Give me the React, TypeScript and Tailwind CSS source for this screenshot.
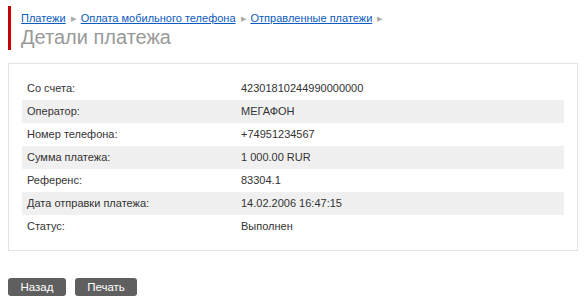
import React from "react";

const rows: [string, string][] = [
  ["Со счета:", "42301810244990000000"],
  ["Оператор:", "МЕГАФОН"],
  ["Номер телефона:", "+74951234567"],
  ["Сумма платежа:", "1 000.00 RUR"],
  ["Референс:", "83304.1"],
  ["Дата отправки платежа:", "14.02.2006 16:47:15"],
  ["Статус:", "Выполнен"],
];

const Sep = () => <span className="mx-[5px] text-[7px] text-[#aaaaaa]">▶</span>;

export default function App() {
  return (
    <div className="w-[588px] h-[307px] bg-white text-[11px] text-[#333333]" style={{ fontFamily: '"Liberation Sans", Arial, sans-serif' }}>
      <div className="pt-[6px] pl-[8px] flex">
        <div className="w-[3px] h-[44px] bg-[#cc0000]" />
        <div className="pl-[10px]">
          <div className="pt-[6px] leading-[13px] text-[11px] flex items-center">
            <a className="text-[#0a5bbf] underline">Платежи</a>
            <Sep />
            <a className="text-[#0a5bbf] underline">Оплата мобильного телефона</a>
            <Sep />
            <a className="text-[#0a5bbf] underline">Отправленные платежи</a>
            <Sep />
          </div>
          <div className="text-[20px] leading-[22px] text-[#999999] mt-[1px]">Детали платежа</div>
        </div>
      </div>
      <div className="mx-[8px] mt-[13px] w-[570px] border border-[#e2e2e2] px-[13px] pt-[13px] pb-[12px]">
        {rows.map(([k, v], i) => (
          <div key={k} className={`flex h-[23px] items-center ${i % 2 === 1 ? "bg-[#f0f0f0]" : ""}`}>
            <div className="w-[219px] pl-[5px]">{k}</div>
            <div>{v}</div>
          </div>
        ))}
      </div>
      <div className="flex gap-[9px] ml-[8px] mt-[27px]">
        <button className="w-[58px] h-[18px] rounded-[3px] bg-[#5f5f5f] text-white text-[11.5px] leading-[18px]">Назад</button>
        <button className="w-[62px] h-[18px] rounded-[3px] bg-[#5f5f5f] text-white text-[11.5px] leading-[18px]">Печать</button>
      </div>
    </div>
  );
}
